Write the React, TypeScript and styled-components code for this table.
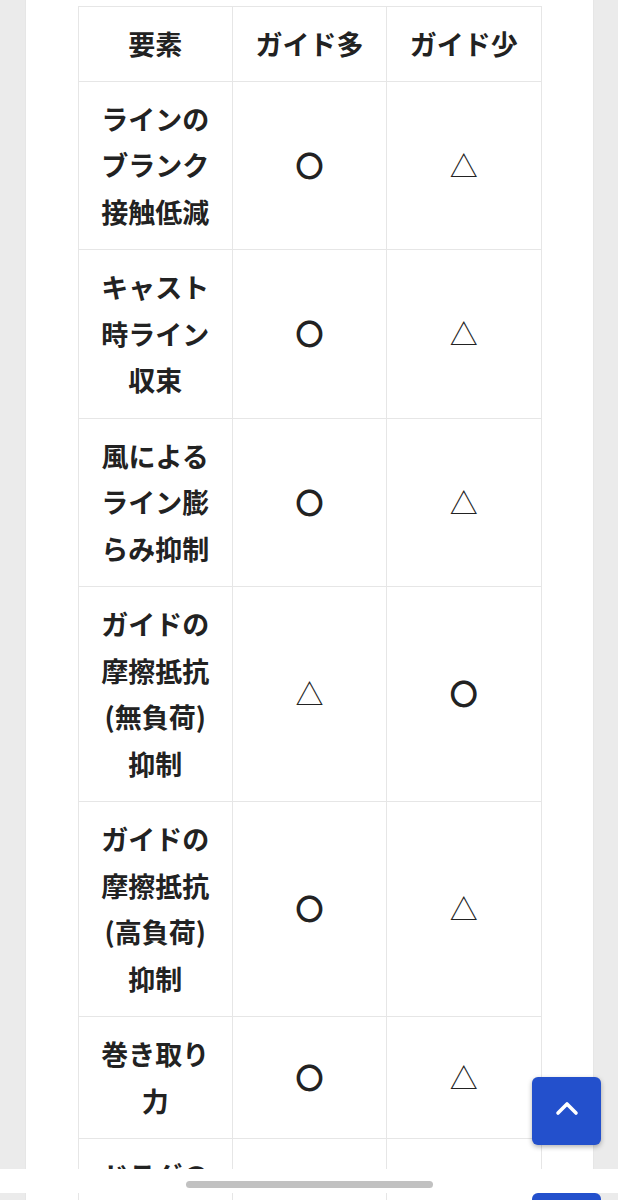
import React, { FC } from "react";
import styled, { createGlobalStyle } from "styled-components";

type Mark = "good" | "fair";

interface Row {
  label: string[];
  many: Mark;
  few: Mark;
}

const rows: Row[] = [
  { label: ["ラインの", "ブランク", "接触低減"], many: "good", few: "fair" },
  { label: ["キャスト", "時ライン", "収束"], many: "good", few: "fair" },
  { label: ["風による", "ライン膨", "らみ抑制"], many: "good", few: "fair" },
  {
    label: ["ガイドの", "摩擦抵抗", "(無負荷)", "抑制"],
    many: "fair",
    few: "good",
  },
  {
    label: ["ガイドの", "摩擦抵抗", "(高負荷)", "抑制"],
    many: "good",
    few: "fair",
  },
  { label: ["巻き取り", "力"], many: "good", few: "fair" },
  { label: ["ドラグの", "滑り出し", "安定"], many: "good", few: "fair" },
];

const GlobalStyle = createGlobalStyle`
  html, body {
    margin: 0;
    padding: 0;
    background: #ebebeb;
  }

  body {
    font-family: "Noto Sans CJK JP", "Noto Sans", sans-serif;
    color: #222222;
  }
`;

const App: FC = () => {
  return (
    <>
      <GlobalStyle />
      <Page>
        <Card>
          <Table>
            <thead>
              <tr>
                <HeadCell>要素</HeadCell>
                <HeadCell>ガイド多</HeadCell>
                <HeadCell>ガイド少</HeadCell>
              </tr>
            </thead>
            <tbody>
              {rows.map((row) => (
                <tr key={row.label.join("")}>
                  <Cell>
                    {row.label.map((line) => (
                      <Line key={line}>{line}</Line>
                    ))}
                  </Cell>
                  <Cell>
                    <Symbol mark={row.many} />
                  </Cell>
                  <Cell>
                    <Symbol mark={row.few} />
                  </Cell>
                </tr>
              ))}
            </tbody>
          </Table>
        </Card>
      </Page>

      <ScrollTop aria-label="ページの先頭へ">
        <svg width="24" height="16" viewBox="0 0 24 16" fill="none">
          <polyline
            points="3,13 12,4 21,13"
            stroke="#ffffff"
            strokeWidth="3.6"
            strokeLinecap="round"
            strokeLinejoin="round"
          />
        </svg>
      </ScrollTop>

      <BottomBar>
        <ScrollPill />
      </BottomBar>
      <ScrollTopEdge />
    </>
  );
};

const Symbol: FC<{ mark: Mark }> = ({ mark }) =>
  mark === "good" ? <Circle>〇</Circle> : <Triangle>△</Triangle>;

const Page = styled.div`
  padding: 0 25px 0 26px;
`;

const Card = styled.div`
  background: #ffffff;
  padding: 6px 0 200px;
  box-shadow: 0 0 1px rgba(0, 0, 0, 0.12);
`;

const Table = styled.table`
  width: 464px;
  margin: 0 auto;
  border-collapse: collapse;
  table-layout: fixed;
  font-size: 27px;
  line-height: 46.5px;
  font-weight: 700;
`;

const Cell = styled.td`
  border: 1.5px solid #e6e6e6;
  padding: 14px 14px;
  text-align: center;
  vertical-align: middle;
`;

const HeadCell = styled(Cell).attrs({ as: "th" })`
  font-weight: 700;
  padding: 13.5px 14px;
`;

const Line = styled.div`
  white-space: nowrap;
`;

const Circle = styled.span`
  font-weight: 700;
  font-size: 28px;
`;

const Triangle = styled.span`
  font-weight: 400;
  font-size: 28px;
`;

const ScrollTop = styled.button`
  position: fixed;
  left: 532px;
  top: 1077px;
  width: 69px;
  height: 68px;
  border: none;
  border-radius: 6px;
  background: #2350cc;
  box-shadow: 0 2px 5px rgba(0, 0, 0, 0.3);
  display: flex;
  align-items: center;
  justify-content: center;
  padding: 0 0 6px;
`;

const BottomBar = styled.div`
  position: fixed;
  left: 0;
  right: 0;
  top: 1169px;
  height: 24px;
  background: #ffffff;
  display: flex;
  justify-content: center;
  padding-top: 12px;
  box-sizing: border-box;
`;

const ScrollPill = styled.div`
  width: 247px;
  height: 7px;
  border-radius: 4px;
  background: #c1c1c1;
`;

const ScrollTopEdge = styled.div`
  position: fixed;
  left: 532px;
  top: 1193px;
  width: 69px;
  height: 20px;
  border-radius: 6px 6px 0 0;
  background: #2350cc;
`;

export default App;
